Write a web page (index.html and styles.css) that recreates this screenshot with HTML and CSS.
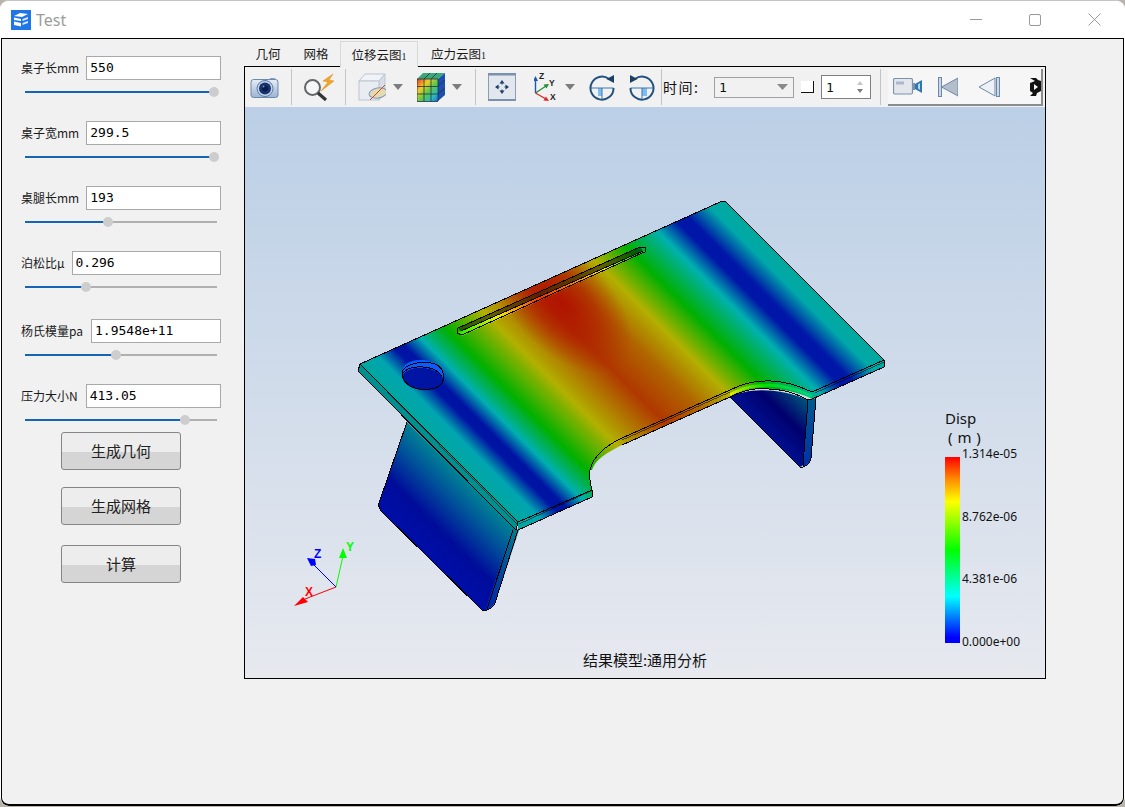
FILE: index.html
```html
<!DOCTYPE html>
<html lang="zh">
<head>
<meta charset="utf-8">
<title>Test</title>
<link rel="stylesheet" href="styles.css">
</head>
<body>
<div class="window">
  <header class="titlebar">
    <svg class="app-icon" width="20" height="20" viewBox="0 0 20 20">
      <rect width="20" height="20" fill="#1f76e6"/>
      <path d="M3 6 L9 3 L17 4 L11 7 Z M3 7.5 L10 9 L10 11 L3 10 Z M3 11.5 L10 13 L10 16.5 L3 15 Z" fill="#fff"/>
      <path d="M11.5 9 L17 7 L17 9 L11.5 11 Z M11.5 13 L17 11 L17 13 L11.5 15 Z" fill="#dbe9fb"/>
    </svg>
    <span class="app-title">Test</span>
    <div class="win-controls">
      <svg class="ctl-min" width="12" height="1" viewBox="0 0 12 1"><rect width="12" height="1" fill="#9a9a9a"/></svg>
      <svg class="ctl-max" width="12" height="12" viewBox="0 0 12 12"><rect x=".5" y=".5" width="11" height="11" rx="1.5" fill="none" stroke="#9a9a9a"/></svg>
      <svg class="ctl-close" width="13" height="13" viewBox="0 0 13 13"><path d="M.5 .5 L12.5 12.5 M12.5 .5 L.5 12.5" stroke="#9a9a9a" fill="none"/></svg>
    </div>
  </header>

  <div class="client">
    <aside class="side">
      <div class="group">
        <div class="row"><label class="lbl">桌子长mm</label><div class="field">550</div></div>
        <div class="slider"><div class="fill" style="width:189px"></div><div class="thumb" style="left:189px"></div></div>
      </div>
      <div class="group">
        <div class="row"><label class="lbl">桌子宽mm</label><div class="field">299.5</div></div>
        <div class="slider"><div class="fill" style="width:189px"></div><div class="thumb" style="left:189px"></div></div>
      </div>
      <div class="group">
        <div class="row"><label class="lbl">桌腿长mm</label><div class="field">193</div></div>
        <div class="slider"><div class="fill" style="width:83px"></div><div class="thumb" style="left:83px"></div></div>
      </div>
      <div class="group group-wide">
        <div class="row"><label class="lbl">泊松比μ</label><div class="field">0.296</div></div>
        <div class="slider"><div class="fill" style="width:61px"></div><div class="thumb" style="left:61px"></div></div>
      </div>
      <div class="group">
        <div class="row"><label class="lbl lbl-pad">杨氏模量pa</label><div class="field">1.9548e+11</div></div>
        <div class="slider"><div class="fill" style="width:91px"></div><div class="thumb" style="left:91px"></div></div>
      </div>
      <div class="group group-last">
        <div class="row"><label class="lbl lbl-pad">压力大小N</label><div class="field">413.05</div></div>
        <div class="slider"><div class="fill" style="width:160px"></div><div class="thumb" style="left:160px"></div></div>
      </div>
      <button class="btn">生成几何</button>
      <button class="btn btn-b">生成网格</button>
      <button class="btn btn-c">计算</button>
    </aside>

    <main class="main">
      <nav class="tabs">
        <span class="tab">几何</span>
        <span class="tab">网格</span>
        <span class="tab tab-active">位移云图<span class="tab-num">1</span></span>
        <span class="tab tab-last">应力云图<span class="tab-num">1</span></span>
      </nav>
      <section class="frame">
        <div class="toolbar">
          <svg class="ml5" width="30" height="24" viewBox="0 0 30 24">
            <defs><linearGradient id="camBody" x1="0" y1="0" x2="0" y2="1"><stop offset="0" stop-color="#e6edf6"/><stop offset="1" stop-color="#9db4d0"/></linearGradient></defs>
            <path d="M20 3 L25 3 L26 5 L20 5 Z" fill="#8aa2c2"/>
            <rect x="1" y="4.5" width="27" height="18" rx="2.5" fill="url(#camBody)" stroke="#6b88ad"/>
            <circle cx="15" cy="13.5" r="8" fill="#c3d2e6" stroke="#5a7aa5"/>
            <circle cx="15" cy="13.5" r="6" fill="#16336e"/>
            <circle cx="15" cy="13.5" r="3" fill="#0b1c48"/>
            <circle cx="13.5" cy="11.5" r="1" fill="#6f8fc5"/>
          </svg>
          <i class="sep ml11"></i>
          <svg class="ml11" width="31" height="28" viewBox="0 0 31 28">
            <path d="M30 1 L20 8 L25 9 L18 18 L31 8 L26 7 Z" fill="#f0a52a" stroke="#d98a18" stroke-width=".5"/>
            <circle cx="9.5" cy="14.5" r="7.5" fill="#f4f6f8" stroke="#666" stroke-width="2"/>
            <path d="M15 20 L23 27" stroke="#333" stroke-width="3.2"/>
          </svg>
          <i class="sep ml11"></i>
          <svg class="ml12" width="28" height="30" viewBox="0 0 28 30">
            <path d="M1 9 L7 2 L27 2 L21 9 Z" fill="#f0f3f7" stroke="#bcc5d0"/>
            <path d="M21 9 L27 2 L27 21 L21 28 Z" fill="#d8dee6" stroke="#bcc5d0"/>
            <rect x="1" y="9" width="20" height="19" fill="#e9edf3" stroke="#bcc5d0"/>
            <ellipse cx="20" cy="21" rx="9" ry="5" fill="#e4dab0" stroke="#7f9abb" transform="rotate(-10 20 21)"/>
            <path d="M12 28 L27 13" stroke="#c8472c"/>
          </svg>
          <svg class="ml7" width="10" height="6" viewBox="0 0 10 6"><path d="M0 0 H10 L5 6 Z" fill="#7d7d7d"/></svg>
          <svg class="ml14" width="28" height="29" viewBox="0 0 28 29">
            <defs><linearGradient id="cubeFace" x1="0" y1="0" x2="1" y2="1">
              <stop offset="0" stop-color="#e8322a"/><stop offset=".3" stop-color="#f2cc28"/><stop offset=".55" stop-color="#5cc84a"/><stop offset=".8" stop-color="#27b6c8"/><stop offset="1" stop-color="#2060d0"/>
            </linearGradient></defs>
            <path d="M0 6 L6 0 L28 0 L21 6 Z" fill="#3aa87a"/>
            <path d="M21 6 L28 0 L28 22 L21 28 Z" fill="#1c4fb0"/>
            <rect x="0" y="6" width="21" height="22.5" fill="url(#cubeFace)"/>
            <path d="M7 6 V28.5 M14 6 V28.5 M0 13.5 H21 M0 21 H21 M21 6 V28 M0 6 H21 M0 6 V28.5 H21 M7 6 L13 0 M14 6 L20 0 M21 13 L28 7 M21 21 L28 15" stroke="#23323f" fill="none" stroke-width=".8"/>
          </svg>
          <svg class="ml7" width="10" height="6" viewBox="0 0 10 6"><path d="M0 0 H10 L5 6 Z" fill="#7d7d7d"/></svg>
          <i class="sep ml13"></i>
          <svg class="ml12" width="28" height="28" viewBox="0 0 28 28">
            <rect x=".5" y=".5" width="27" height="27" fill="#e2e7ee" stroke="#8a9db8"/>
            <rect x="0" y="0" width="28" height="2.5" fill="#7a90ad"/>
            <rect x="0" y="26" width="28" height="2" fill="#7a90ad"/>
            <path d="M14 10 V11.5 M14 16.5 V18 M10 14 H11.5 M16.5 14 H18" stroke="#1e3c68" fill="none" stroke-width="1"/>
            <path d="M14 7 L11.5 10.5 H16.5 Z M14 21 L11.5 17.5 H16.5 Z M7 14 L10.5 11.5 V16.5 Z M21 14 L17.5 11.5 V16.5 Z" fill="#1e3c68"/>
          </svg>
          <svg class="ml18" width="28" height="30" viewBox="0 0 28 30">
            <path d="M1.5 21 V7" stroke="#1f57b0" stroke-width="1.4"/><path d="M1.5 4 L4 9 H-1 Z" fill="#1f57b0"/>
            <path d="M1.5 21 L12 14" stroke="#1f8f3a" stroke-width="1.4"/><path d="M15 12 L9.5 12.5 L12.5 16.5 Z" fill="#1f8f3a"/>
            <path d="M1.5 21 L12 27" stroke="#e0282a" stroke-width="1.4"/><path d="M15 29 L9.5 28.5 L12 24.5 Z" fill="#e0282a"/>
            <text class="ax-lbl" x="5" y="7">Z</text><text class="ax-lbl" x="15" y="14">Y</text><text class="ax-lbl" x="16" y="28">X</text>
          </svg>
          <svg class="ml3" width="10" height="6" viewBox="0 0 10 6"><path d="M0 0 H10 L5 6 Z" fill="#7d7d7d"/></svg>
          <svg class="ml14" width="26" height="27" viewBox="0 0 26 27">
            <rect x="9" y="14" width="4" height="8" fill="#7fbdf0"/>
            <path d="M1.5 14 H24.5 M13 14 V26" stroke="#3b78b4" fill="none"/>
            <path d="M20 5 A11.5 11.5 0 1 0 24.5 14" fill="none" stroke="#24527f" stroke-width="2"/>
            <path d="M25 9 L25 1 L17.5 5 Z" fill="#1c3f66"/>
          </svg>
          <svg class="ml14" width="26" height="27" viewBox="0 0 26 27">
            <rect x="13" y="14" width="5" height="8" fill="#7fbdf0"/>
            <path d="M1.5 14 H24.5 M13 14 V26" stroke="#3b78b4" fill="none"/>
            <path d="M6 5 A11.5 11.5 0 1 1 1.5 14" fill="none" stroke="#24527f" stroke-width="2"/>
            <path d="M1 9 L1 1 L8.5 5 Z" fill="#1c3f66"/>
          </svg>
          <i class="sep ml6"></i>
          <span class="time-lbl">时间:</span>
          <div class="combo"><span>1</span><svg width="11" height="6" viewBox="0 0 11 6"><path d="M0 0 H11 L5.5 6 Z" fill="#8a8a8a"/></svg></div>
          <i class="check"></i>
          <div class="spin"><span>1</span>
            <svg width="8" height="16" viewBox="0 0 8 16"><path d="M4 2 L7 6 H1 Z" fill="#c6c6c6"/><path d="M1 10 H7 L4 14 Z" fill="#7c7c7c"/></svg>
          </div>
          <i class="sep ml9"></i>
          <div class="anim">
            <svg class="ml5" width="29" height="17" viewBox="0 0 29 17">
              <rect x=".5" y=".5" width="19" height="15.5" rx="1.5" fill="#e3e7ec" stroke="#7b92ae" stroke-width="1.2"/>
              <rect x="3" y="3.5" width="8" height="3" fill="#a9b8ca"/>
              <path d="M20 5 L22 5 L22 12 L20 12 Z" fill="#7b92ae"/>
              <path d="M22 6 L29 2 L29 15 L22 11 Z" fill="#2f78ad"/>
              <path d="M25 6.5 L27 5 L27 12 L25 10.5 Z" fill="#b5dbe9"/>
            </svg>
            <svg class="ml16" width="20" height="20" viewBox="0 0 20 20">
              <rect x=".5" y=".5" width="3" height="19" fill="#cdd6e1" stroke="#6c88ab"/>
              <path d="M3.5 10 L20 1 V19 Z" fill="#b4bdca" stroke="#6c88ab"/>
            </svg>
            <svg class="ml20" width="22" height="20" viewBox="0 0 22 20">
              <path d="M1 10 L17 1 V19 Z" fill="#edf0f4" stroke="#6c88ab"/>
              <rect x="18.5" y=".5" width="3" height="19" fill="#cdd6e1" stroke="#6c88ab"/>
            </svg>
            <svg class="ml30" width="11" height="18" viewBox="0 0 11 18">
              <rect width="11" height="18" fill="#111"/>
              <path d="M0 0 L5 3 L0 5 Z M6 0 H11 V3 L8 2 Z M4 6 L8 9 L4 12 Z M0 13 L3 15 L0 18 Z M7 15 L11 13 V18 H6 Z" fill="#f4f4f4"/>
            </svg>
          </div>
        </div>

        <div class="canvas">
          <svg class="scene" width="800" height="571" viewBox="245 107 800 571">
            <defs>
              <linearGradient id="heat" gradientUnits="userSpaceOnUse" x1="360" y1="364" x2="622.5" y2="101.5">
                <stop offset="0" stop-color="#00a8a0"/>
                <stop offset=".05" stop-color="#00a4b0"/>
                <stop offset=".095" stop-color="#0014a4"/>
                <stop offset=".12" stop-color="#0014a4"/>
                <stop offset=".165" stop-color="#00b0b0"/>
                <stop offset=".23" stop-color="#00b000"/>
                <stop offset=".335" stop-color="#b2b000"/>
                <stop offset=".47" stop-color="#b03800"/>
                <stop offset=".56" stop-color="#b06400"/>
                <stop offset=".645" stop-color="#b2b000"/>
                <stop offset=".73" stop-color="#00b000"/>
                <stop offset=".82" stop-color="#00b0b0"/>
                <stop offset=".875" stop-color="#0016a8"/>
                <stop offset=".905" stop-color="#0016a8"/>
                <stop offset=".965" stop-color="#00a8a8"/>
                <stop offset="1" stop-color="#00a8a0"/>
              </linearGradient>
              <linearGradient id="heatBright" gradientUnits="userSpaceOnUse" x1="360" y1="364" x2="622.5" y2="101.5">
                <stop offset="0" stop-color="#00e0d0"/>
                <stop offset=".112" stop-color="#0060ff"/>
                <stop offset=".23" stop-color="#00f000"/>
                <stop offset=".355" stop-color="#f0f000"/>
                <stop offset=".47" stop-color="#ff3000"/>
                <stop offset=".56" stop-color="#ff8000"/>
                <stop offset=".645" stop-color="#f0f000"/>
                <stop offset=".73" stop-color="#00e000"/>
                <stop offset=".82" stop-color="#00d0a0"/>
                <stop offset=".89" stop-color="#0040f0"/>
                <stop offset="1" stop-color="#00e0d0"/>
              </linearGradient>
              <radialGradient id="hot">
                <stop offset="0" stop-color="#b00c00" stop-opacity=".9"/>
                <stop offset=".5" stop-color="#b01400" stop-opacity=".55"/>
                <stop offset="1" stop-color="#b02000" stop-opacity="0"/>
              </radialGradient>
              <linearGradient id="legL" gradientUnits="userSpaceOnUse" x1="462" y1="476" x2="404" y2="534">
                <stop offset="0" stop-color="#008494"/>
                <stop offset=".3" stop-color="#00509a"/>
                <stop offset=".65" stop-color="#000c9a"/>
                <stop offset="1" stop-color="#000ea8"/>
              </linearGradient>
              <linearGradient id="legR" gradientUnits="userSpaceOnUse" x1="812" y1="396" x2="770" y2="438">
                <stop offset="0" stop-color="#006a80"/>
                <stop offset=".55" stop-color="#00006e"/>
                <stop offset="1" stop-color="#001090"/>
              </linearGradient>
              <linearGradient id="legRs" x1="0" y1="0" x2="0" y2="1">
                <stop offset="0" stop-color="#005a90"/>
                <stop offset="1" stop-color="#0030a8"/>
              </linearGradient>
              <linearGradient id="legLs" x1="1" y1="0" x2="0" y2="1">
                <stop offset="0" stop-color="#00808c"/>
                <stop offset=".6" stop-color="#0040a0"/>
                <stop offset="1" stop-color="#0020b0"/>
              </linearGradient>
              <clipPath id="topClip">
                <path d="M360 364 L720 202 Q725 200 727 203 L884 360 L812 392 C795 384 780 380 765 381 C752 381 742 384 730 390 L622 438 C605 446 593 457 590 470 C589 478 590 484 592 490 L518 522 Z"/>
              </clipPath>
            </defs>

            <!-- right leg -->
            <path d="M730 397 C745 389 775 386 808 400 L803 465 Q801 468 799 466 Z" fill="url(#legR)"/>
            <path d="M808 400 L816 398 L811 458 Q810 464 803 467 Z" fill="url(#legRs)"/>
            <path class="edge" d="M730 397 L799 466 Q801 468 803 467 Q810 465 811 458 L816 398 M808 400 L803 466"/>

            <!-- left leg -->
            <path d="M407 422 L517 530 L495 603 L487 610 Q484 611 482 610 L382 512 Q378 508 379 503 Z" fill="url(#legL)"/>
            <path d="M513 528 L519 530 L495 603 Q492 608 485 611 Z" fill="url(#legLs)"/>
            <path class="edge" d="M407 422 L379 503 Q378 508 382 512 L482 610 Q484 611 487 610 Q493 608 495 603 L518 530 M513 530 L487 609"/>

            <!-- plate rims -->
            <path d="M360 364 L358 371 L516 530 L518 522 Z" fill="#00908f"/>
            <path d="M518 522 L592 490 L592 497 L518 530 Z" fill="url(#heat)"/>
            <path d="M884 360 L884 367 L812 399 C795 390 775 388 755 389 C745 390 738 393 730 397 L622 445 C606 453 595 460 592 470 L590 470 C593 457 605 446 622 438 L730 390 C742 384 752 381 765 381 C780 380 795 384 812 392 Z" fill="url(#heat)"/>
            <path d="M812 395 C795 387 780 383 765 384 C752 384 742 387 730 393 L730 396 C742 390 752 387 765 387 C780 386 795 390 811 398 Z" fill="url(#heatBright)"/>

            <!-- plate -->
            <path d="M360 364 L720 202 Q725 200 727 203 L884 360 L812 392 C795 384 780 380 765 381 C752 381 742 384 730 390 L622 438 C605 446 593 457 590 470 C589 478 590 484 592 490 L518 522 Z" fill="url(#heat)"/>
            <g clip-path="url(#topClip)">
              <ellipse cx="562" cy="303" rx="48" ry="88" fill="url(#hot)" transform="rotate(-45 562 303)"/>
            </g>

            <!-- hole -->
            <ellipse cx="423" cy="373" rx="21" ry="13" fill="#0a5cff" transform="rotate(6 423 373)"/>
            <ellipse cx="423" cy="379" rx="20.5" ry="11" fill="#0014a4" transform="rotate(6 423 379)"/>
            <path class="edge" d="M402 372 C405 362 435 357 442 370 C446 380 442 388 430 389 C415 391 402 385 402 372"/>
            <path class="edge" d="M402 374 C408 365 432 363 442 376"/>

            <!-- slot -->
            <path d="M458 328 L640 247 L643 251 L461 332 Z" fill="url(#heat)"/>
            <path d="M458 328 L640 247 L643 251 L461 332 Z" fill="#000" fill-opacity=".45"/>
            <path d="M457 333 L642 252 L645 252 L462 334 Z" fill="url(#heatBright)"/>
            <path d="M461 332 L643 251 L645 252 L462 336 Z" fill="url(#heatBright)"/>
            <path class="edge" d="M457 333 L458 328 L640 247 L646 248 L645 252 L642 253 L462 335 Z M461 331 L643 251"/>

            <!-- outlines -->
            <path class="edge" d="M360 364 L720 202 Q725 200 727 203 L884 360 L884 367 L812 399 M884 360 L812 392 C795 384 780 380 765 381 C752 381 742 384 730 390 L622 438 C605 446 593 457 590 470 C589 478 590 484 592 490 L518 522 L360 364 L358 371 L516 530 L518 522 M592 490 L592 497 L518 530"/>
            <path class="edge" d="M812 399 L808 400 C790 390 775 388 755 389 C745 390 738 393 730 397 L622 445"/>
            <path class="edge thin" d="M884 362 L815 393 M730 392 L622 440 M591 491 L519 524 M362 366 L518 525"/>

            <!-- triad -->
            <path d="M336 587 L305 599" stroke="#f00" stroke-width="1"/>
            <path d="M294 606 L308 602 L303 597 Z" fill="#f00"/>
            <path d="M336 587 L343 556" stroke="#0f0" stroke-width="1"/>
            <path d="M343 548 L339 558 L347 558 Z" fill="#0f0"/>
            <path d="M336 587 L312 563" stroke="#00f" stroke-width="1"/>
            <path d="M307 558 L315 559 L316 565 L311 566 Z" fill="#00f"/>
            <text class="tri tri-x" x="305" y="596">X</text>
            <text class="tri tri-y" x="346" y="551">Y</text>
            <text class="tri tri-z" x="314" y="558">Z</text>
          </svg>

          <div class="legend">
            <div class="legend-title">Disp</div>
            <div class="legend-unit">( m )</div>
            <div class="legend-body">
              <div class="legend-bar"></div>
              <div class="legend-vals">
                <span>1.314e-05</span><span>8.762e-06</span><span>4.381e-06</span><span>0.000e+00</span>
              </div>
            </div>
          </div>
          <div class="caption">结果模型:通用分析</div>
        </div>
      </section>
    </main>
  </div>
</div>
</body>
</html>
```

FILE: styles.css
```css
* { box-sizing: border-box; }
html, body { margin: 0; padding: 0; height: 100%; overflow: hidden; }
body { background: #b8b4ac; font-family: "Noto Sans CJK SC", "Noto Sans", sans-serif; color: #111; }

.window {
  width: 1125px; height: 806px; background: #fff;
  border-radius: 9px; overflow: hidden;
  display: flex; flex-direction: column;
  border-top: 1px solid #c4c4c4;
}

.titlebar { height: 37px; flex: none; display: flex; align-items: center; padding-left: 10px; padding-right: 24px; background: #fff; }
.app-icon { margin-left: 1px; flex: none; }
.app-title { margin-left: 5px; font: 16px/20px "Noto Sans", sans-serif; color: #9c9c9c; }
.win-controls { margin-left: auto; display: flex; align-items: center; }
.ctl-max { margin-left: 47px; }
.ctl-close { margin-left: 47px; }

.client {
  flex: 1; margin: 0 1px; display: flex;
  background: #f1f1f1; border: 1px solid #000; border-bottom-width: 2px;
  border-radius: 0 0 8px 8px;
}

.side { width: 242px; flex: none; padding: 17px 23px 0 19px; display: flex; flex-direction: column; align-items: flex-start; }
.group { width: 100%; margin-bottom: 24px; }
.group-wide { margin-bottom: 27px; }
.group-last { margin-bottom: 7px; }
.row { display: flex; align-items: center; gap: 7px; height: 24px; }
.lbl { font-size: 12px; line-height: 16px; white-space: nowrap; color: #1a1a1a; }
.lbl-pad { margin-right: 1px; }
.field {
  flex: 1; height: 24px; background: #fff; border: 1px solid #a9a9a9; padding-left: 3px;
  font: 13px/22px "DejaVu Sans Mono", monospace; color: #000;
}
.slider { position: relative; width: 192px; height: 2px; margin: 11px 0 4px 4px; background: #b0b0b0; }
.fill { height: 2px; background: #1565b5; }
.thumb { position: absolute; top: -4px; width: 10px; height: 10px; margin-left: -5px; border-radius: 50%; background: #cdcdcd; }

.btn {
  display: block; width: 120px; height: 38px; margin-left: 40px; padding: 0;
  border: 1px solid #858585; border-radius: 3px;
  background: linear-gradient(#ededed 0, #ededed 19px, #d5d5d5 19px, #d5d5d5 100%);
  font: 15px/20px "Noto Sans CJK SC", sans-serif; color: #222;
}
.btn-b { margin-top: 17px; }
.btn-c { margin-top: 20px; }

.main { width: 802px; flex: none; display: flex; flex-direction: column; }
.tabs { height: 27px; flex: none; display: flex; align-items: flex-end; }
.tab { height: 24px; padding: 0 11.5px; font-size: 12.5px; line-height: 23px; color: #1a1a1a; white-space: nowrap; }
.tab-active { height: 26px; line-height: 25px; padding: 0 10.5px; border: 1px solid #d8d8d8; border-bottom: 0; background: #f1f1f1; position: relative; top: 1px; z-index: 1; }
.tab-last { padding-left: 13px; }
.tab-num { font: 10px "Liberation Serif", serif; }

.frame { width: 802px; height: 613px; border: 1px solid #000; display: flex; flex-direction: column; flex: none; }

.toolbar { height: 40px; flex: none; display: flex; align-items: center; background: #f1f1f1; }
.toolbar svg { flex: none; }
.sep { width: 1px; height: 36px; background: #c4c4c4; flex: none; }
.ml3 { margin-left: 3px; } .ml5 { margin-left: 5px; } .ml6 { margin-left: 6px; } .ml7 { margin-left: 7px; }
.ml9 { margin-left: 9px; } .ml11 { margin-left: 11px; } .ml12 { margin-left: 12px; } .ml13 { margin-left: 13px; }
.ml14 { margin-left: 14px; } .ml16 { margin-left: 16px; } .ml18 { margin-left: 18px; } .ml20 { margin-left: 20px; } .ml30 { margin-left: 30px; }
.ax-lbl { font: bold 8.5px "Liberation Sans", sans-serif; fill: #222; }

.time-lbl { margin-left: 1px; width: 37px; font-size: 14px; letter-spacing: 1.5px; line-height: 20px; white-space: nowrap; color: #111; }
.combo {
  margin-left: 14px; width: 80px; height: 21px; border: 1px solid #a0a0a0; background: #f1f1f1;
  display: flex; align-items: center; justify-content: space-between; padding: 0 5px 0 4px;
  font: 13px "DejaVu Sans Mono", monospace;
}
.check { margin-left: 7px; width: 13px; height: 12px; flex: none; background: #fff; border-right: 1px solid #111; border-bottom: 1px solid #111; }
.spin {
  margin-left: 7px; width: 50px; height: 24px; border: 1px solid #808080; background: #fff;
  display: flex; align-items: center; justify-content: space-between; padding: 0 6px 0 4px;
  font: 13px "DejaVu Sans Mono", monospace;
}
.anim {
  margin-left: 7px; width: 155px; height: 37px; flex: none; align-self: flex-end; margin-bottom: 1px;
  display: flex; align-items: center; background: #f6f6f6;
  border-right: 2px solid #8c8c8c; border-bottom: 2px solid #8c8c8c;
}

.canvas { position: relative; height: 571px; flex: none; background: linear-gradient(#bbcfe6, #e7e9ef); overflow: hidden; }
.scene { position: absolute; left: 0; top: 0; }
.edge { fill: none; stroke: #000; stroke-width: 1; shape-rendering: crispEdges; }
.thin { stroke-width: .7; stroke-opacity: .75; }
.tri { font: bold 12px "Liberation Sans", sans-serif; }
.tri-x { fill: #f00; }
.tri-y { fill: #0f0; }
.tri-z { fill: #00f; }

.legend { position: absolute; left: 700px; top: 302px; }
.legend-title { font: 15px/19px "Noto Sans", sans-serif; color: #111; }
.legend-unit { margin-left: 3px; font: 15px/19px "Noto Sans", sans-serif; word-spacing: 1px; color: #111; }
.legend-body { display: flex; margin-top: 10px; }
.legend-bar { width: 15px; height: 186px; background: linear-gradient(#f00 0, #ff8c00 12%, #ff0 24%, #0f0 50%, #0ff 75%, #00f 97%, #00f 100%); }
.legend-vals { margin: -10px 0 0 2px; height: 202px; display: flex; flex-direction: column; justify-content: space-between; font: 12px/14px "Noto Sans", sans-serif; color: #111; }

.caption { position: absolute; left: 0; right: 0; bottom: 7px; text-align: center; font-size: 15px; line-height: 22px; color: #111; }
```
